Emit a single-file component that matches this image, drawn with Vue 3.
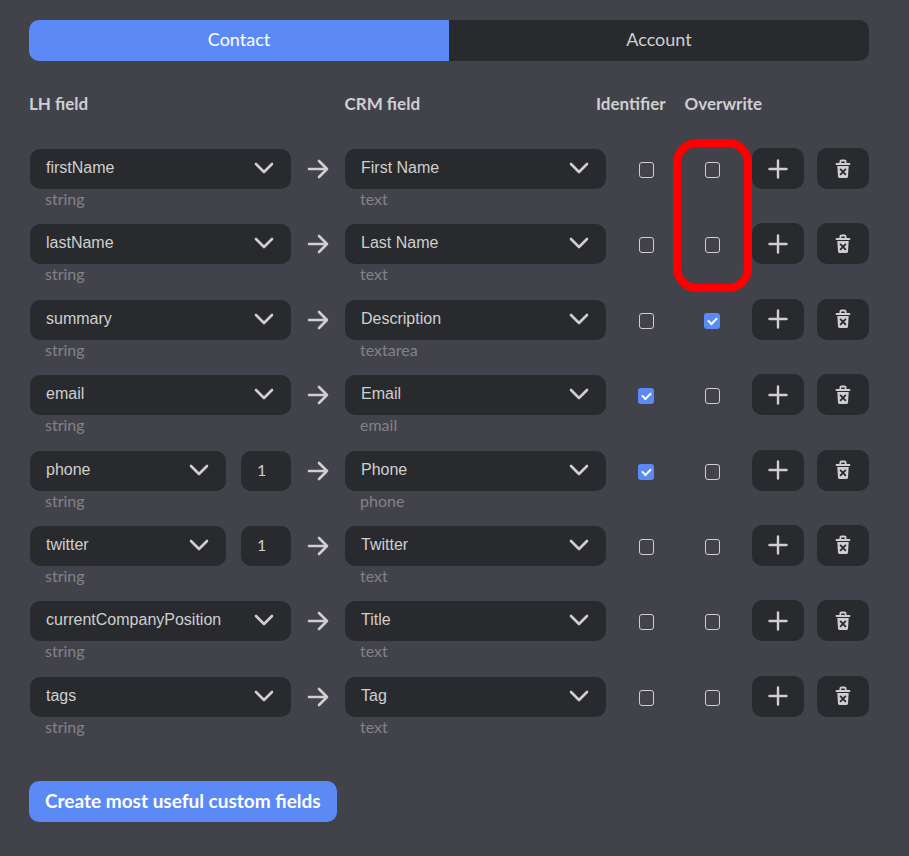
<script setup>
import { ref } from 'vue'

const activeTab = ref('Contact')
const tabs = ['Contact', 'Account']

const lhFields = ['firstName', 'lastName', 'summary', 'email', 'phone', 'twitter', 'currentCompanyPosition', 'tags']
const crmFields = ['First Name', 'Last Name', 'Description', 'Email', 'Phone', 'Twitter', 'Title', 'Tag']
const crmTypes = {
  'First Name': 'text',
  'Last Name': 'text',
  Description: 'textarea',
  Email: 'email',
  Phone: 'phone',
  Twitter: 'text',
  Title: 'text',
  Tag: 'text',
}

let nextId = 9
const rows = ref([
  { id: 1, lh: 'firstName', crm: 'First Name', identifier: false, overwrite: false },
  { id: 2, lh: 'lastName', crm: 'Last Name', identifier: false, overwrite: false },
  { id: 3, lh: 'summary', crm: 'Description', identifier: false, overwrite: true },
  { id: 4, lh: 'email', crm: 'Email', identifier: true, overwrite: false },
  { id: 5, lh: 'phone', index: '1', crm: 'Phone', identifier: true, overwrite: false },
  { id: 6, lh: 'twitter', index: '1', crm: 'Twitter', identifier: false, overwrite: false },
  { id: 7, lh: 'currentCompanyPosition', crm: 'Title', identifier: false, overwrite: false },
  { id: 8, lh: 'tags', crm: 'Tag', identifier: false, overwrite: false },
])

function addRow(idx) {
  rows.value.splice(idx + 1, 0, { ...rows.value[idx], id: nextId++, identifier: false, overwrite: false })
}

function removeRow(idx) {
  rows.value.splice(idx, 1)
}
</script>

<template>
  <main class="mapping">
    <div class="tabs">
      <button v-for="tab in tabs" :key="tab" class="tab" :class="{ active: tab === activeTab }" @click="activeTab = tab">{{ tab }}</button>
    </div>

    <div class="head">
      <span>LH field</span>
      <span></span>
      <span>CRM field</span>
      <div class="head-flags">
        <span>Identifier</span>
        <span>Overwrite</span>
      </div>
    </div>

    <div class="rows">
      <div v-for="(row, idx) in rows" :key="row.id" class="row">
        <div>
          <div class="field">
            <div class="select">
              <select v-model="row.lh" aria-label="LH field">
                <option v-for="f in lhFields" :key="f">{{ f }}</option>
              </select>
              <svg class="chevron" viewBox="0 0 20 12"><path d="M2 2l8 8 8-8" /></svg>
            </div>
            <input v-if="row.index" v-model="row.index" class="index" type="text" aria-label="Index">
          </div>
          <div class="type">string</div>
        </div>

        <svg class="arrow" viewBox="0 0 22 20"><path d="M2 10h18M12 2l8 8-8 8" /></svg>

        <div>
          <div class="field">
            <div class="select">
              <select v-model="row.crm" aria-label="CRM field">
                <option v-for="f in crmFields" :key="f">{{ f }}</option>
              </select>
              <svg class="chevron" viewBox="0 0 20 12"><path d="M2 2l8 8 8-8" /></svg>
            </div>
          </div>
          <div class="type">{{ crmTypes[row.crm] }}</div>
        </div>

        <div class="flags">
          <input v-model="row.identifier" type="checkbox" aria-label="Identifier">
          <input v-model="row.overwrite" type="checkbox" aria-label="Overwrite">
        </div>

        <div class="actions">
          <button class="icon-btn" aria-label="Add" @click="addRow(idx)">
            <svg class="plus" viewBox="0 0 20 20"><path d="M10 1.5v17M1.5 10h17" /></svg>
          </button>
          <button class="icon-btn" aria-label="Delete" @click="removeRow(idx)">
            <svg class="trash" viewBox="0 0 16 20">
              <path class="line" d="M1.5 5h13M5.3 4.4V2.8q0-1.3 1.3-1.3h2.8q1.3 0 1.3 1.3v1.6" />
              <path class="can" d="M2.3 7h11.4l-.7 10.4q-.1 1.6-1.7 1.6H4.7q-1.6 0-1.7-1.6z" />
              <path class="cross" d="M5.6 10.4l4.8 5M10.4 10.4l-4.8 5" />
            </svg>
          </button>
        </div>
      </div>
      <div class="highlight"></div>
    </div>

    <button class="create">Create most useful custom fields</button>
  </main>
</template>

<style>
body { background:#42424a; }
</style>

<style scoped>
.mapping { box-sizing:border-box; padding:20px 40px 34px 29px; color:#cfcfcf; font-family:Lato,"Liberation Sans",sans-serif; }
.mapping *, .mapping *::before { box-sizing:border-box; }
button, input, select { margin:0; border:0; font-family:inherit; color:inherit; }
button { cursor:pointer; }
svg { display:block; fill:none; stroke:#cfcfcf; stroke-linecap:round; stroke-linejoin:round; }

.tabs { display:flex; border-radius:10px; overflow:hidden; }
.tab { flex:1; height:41px; padding:0 0 3px; background:#292a2e; font-size:18px; }
.tab.active { background:#5b8af7; color:#fff; }

.head, .row { display:grid; grid-template-columns:minmax(0,1fr) 54px minmax(0,1fr) 146px 117px; }
.head { margin-top:32px; font-size:17px; font-weight:700; line-height:22px; }
.head-flags { display:flex; gap:19px; margin-left:-10px; white-space:nowrap; }

.rows { position:relative; display:grid; grid-auto-rows:1fr; min-height:603px; margin-top:33px; padding-left:1px; }
.field { display:flex; gap:15px; margin-top:1px; }
.select { position:relative; flex:1; min-width:0; }
.select select { display:block; width:100%; height:40px; padding:0 44px 3px 16px; border-radius:10px; background:#292a2e; font-family:"Liberation Sans",Arial,sans-serif; font-size:16px; appearance:none; }
.chevron { position:absolute; right:17px; top:13px; width:20px; height:12px; stroke-width:2.6; pointer-events:none; }
.index { width:50px; height:40px; padding:0 16px 2px; border-radius:10px; background:#292a2e; font-size:16px; }
.type { padding-left:15px; color:#828286; font-size:16px; line-height:20px; }
.arrow { width:22px; height:20px; margin:11px 16px 0; stroke-width:2.6; }

.flags { display:grid; grid-template-columns:1fr 1fr; height:44px; padding:0 7px; place-items:center; }
.flags input { width:15px; height:16px; border:1px solid #cfcfcf; border-radius:3px; appearance:none; }
.flags input:checked { display:grid; width:16px; border:0; background:#5b8af7; place-items:center; }
.flags input:checked::before { content:""; width:9px; height:6px; margin-top:-2px; border:solid #fff; border-width:0 0 2px 2px; transform:rotate(-45deg); }

.actions { display:flex; gap:13px; }
.icon-btn { display:grid; width:52px; height:41px; padding:0; border-radius:10px; background:#292a2e; place-items:center; }
.plus { width:20px; height:20px; stroke-width:2.4; }
.trash { width:16px; height:20px; }
.trash .line { stroke-width:1.8; }
.trash .can { fill:#cfcfcf; stroke:none; }
.trash .cross { stroke:#292a2e; stroke-width:1.8; }

/* frame around the overwrite flags of the first two rows */
.highlight { position:absolute; top:-9px; right:117px; width:79px; height:153px; border:8px solid #f00; border-radius:24px; pointer-events:none; }

.create { height:41px; margin-top:30px; padding:0 16px 2px; border-radius:10px; background:#5b8af7; color:#fff; font-size:19px; font-weight:700; }
</style>
